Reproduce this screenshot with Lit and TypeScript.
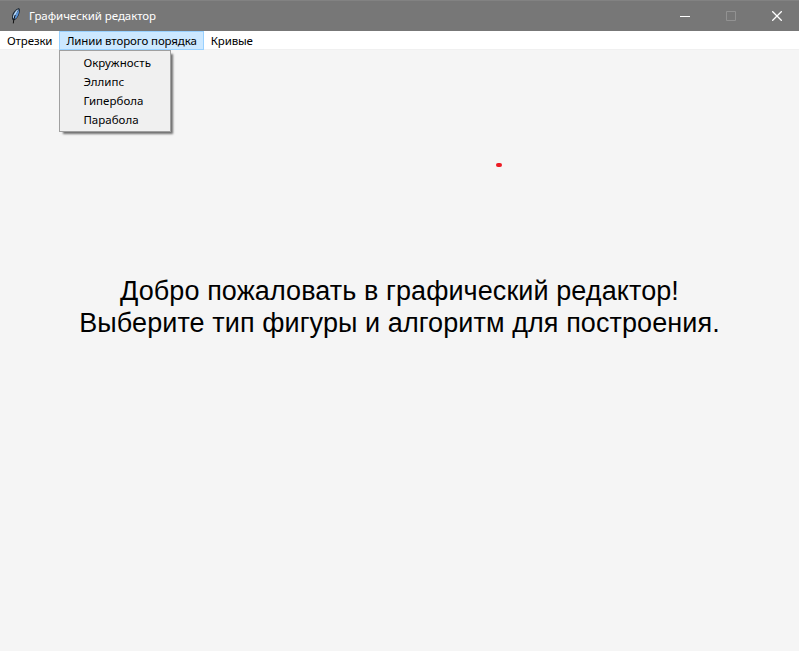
import { LitElement, html, css } from "lit";
import { customElement, property, state } from "lit/decorators.js";
import { classMap } from "lit/directives/class-map.js";

interface Menu {
  label: string;
  items: string[];
}

const MENUS: Menu[] = [
  { label: "Отрезки", items: [] },
  { label: "Линии второго порядка", items: ["Окружность", "Эллипс", "Гипербола", "Парабола"] },
  { label: "Кривые", items: [] },
];

@customElement("title-bar")
class TitleBar extends LitElement {
  @property() caption = "";

  static styles = css`
    :host {
      display: flex;
      box-sizing: border-box;
      height: 31px;
      align-items: center;
      background: #777;
      border-top: 1px solid #828282;
      color: #fff;
    }
    .feather { width: 11px; height: 18px; margin-left: 10px; }
    .caption {
      flex: 1;
      margin-left: 8px;
      font: 11.5px/18px "Noto Sans", sans-serif;
      letter-spacing: -0.07px;
      white-space: nowrap;
    }
    .button {
      width: 46px;
      height: 30px;
      display: flex;
      align-items: center;
      justify-content: center;
      flex: none;
    }
    .button:last-child { width: 45px; }
    svg { display: block; }
  `;

  render() {
    return html`
      <svg class="feather" viewBox="0 0 11 18">
        <path d="M9 .9C6 1.7 3 4.6 2.2 8.4L2 12 3.2 13.6 5.6 12.6C8.2 10.4 9.9 6.8 9.9 2.6Z" fill="#1c2733" />
        <path d="M8.6 1.9C6 3.2 3.6 6 3 9.6L3.1 12 5 9Z" fill="#b5d8fa" />
        <path d="M9 2.4C9.2 6.4 7.8 9.8 5 11.9L3.8 11.8 5.6 7.4Z" fill="#5b95da" />
        <path d="M5.2 8C4.3 10.6 3.6 13 3.3 16.4" fill="none" stroke="#111" stroke-width="1" />
      </svg>
      <span class="caption">${this.caption}</span>
      <div class="button">
        <svg width="10" height="10" shape-rendering="crispEdges"><path d="M0 5h10v1H0z" fill="#fff" /></svg>
      </div>
      <div class="button">
        <svg width="10" height="10"><path d="M.5.5h9v9h-9z" fill="none" stroke="#929292" /></svg>
      </div>
      <div class="button">
        <svg width="10" height="10"><path d="M.2.2l9.6 9.6M9.8.2L.2 9.8" stroke="#fff" stroke-width="1.3" /></svg>
      </div>
    `;
  }
}

@customElement("menu-bar")
class MenuBar extends LitElement {
  @state() private open = 1;

  static styles = css`
    :host {
      display: flex;
      box-sizing: border-box;
      height: 19px;
      background: #fff;
      border-bottom: 1px solid #f0f0f0;
      font: 11.5px/17px "Noto Sans", sans-serif;
      letter-spacing: -0.13px;
      color: #000;
      white-space: nowrap;
    }
    .entry { position: relative; box-sizing: border-box; height: 19px; padding: 1px 7px; cursor: default; }
    .entry.open { padding: 0 6px; border: 1px solid #99d1ff; background: #cce8ff; }
    .popup {
      position: absolute;
      z-index: 1;
      left: -1px;
      top: 18px;
      width: 112px;
      height: 82px;
      box-sizing: border-box;
      padding: 2px;
      border: 1px solid #a0a0a0;
      background: #f0f0f0;
      box-shadow: 3px 3px 2px -1px rgba(0, 0, 0, 0.55);
      letter-spacing: 0.03px;
    }
    .item { height: 19px; line-height: 19px; padding-left: 21px; }
  `;

  render() {
    return MENUS.map(
      (menu, i) => html`
        <div class=${classMap({ entry: true, open: i === this.open })} @click=${() => (this.open = i)}>
          <span>${menu.label}</span>
          ${i === this.open && menu.items.length
            ? html`<div class="popup">${menu.items.map((item) => html`<div class="item">${item}</div>`)}</div>`
            : ""}
        </div>
      `
    );
  }
}

@customElement("app-root")
class AppRoot extends LitElement {
  static styles = css`
    :host {
      display: flex;
      flex-direction: column;
      height: 100vh;
      background: #f5f5f5;
      overflow: hidden;
    }
    .canvas {
      position: relative;
      flex: 1;
      display: flex;
      justify-content: center;
      padding-top: 225px;
      box-sizing: border-box;
    }
    .welcome {
      margin: 0;
      text-align: center;
      font: 27px/32px "Liberation Sans", Arial, sans-serif;
      letter-spacing: 0.085px;
      color: #000;
      white-space: nowrap;
    }
    .dot {
      position: absolute;
      left: 496px;
      top: 113px;
      width: 6px;
      height: 4px;
      border-radius: 2px;
      background: #ed1c24;
    }
  `;

  render() {
    return html`
      <title-bar caption="Графический редактор"></title-bar>
      <menu-bar></menu-bar>
      <main class="canvas">
        <p class="welcome">Добро пожаловать в графический редактор!<br />Выберите тип фигуры и алгоритм для построения.</p>
        <span class="dot"></span>
      </main>
    `;
  }
}
